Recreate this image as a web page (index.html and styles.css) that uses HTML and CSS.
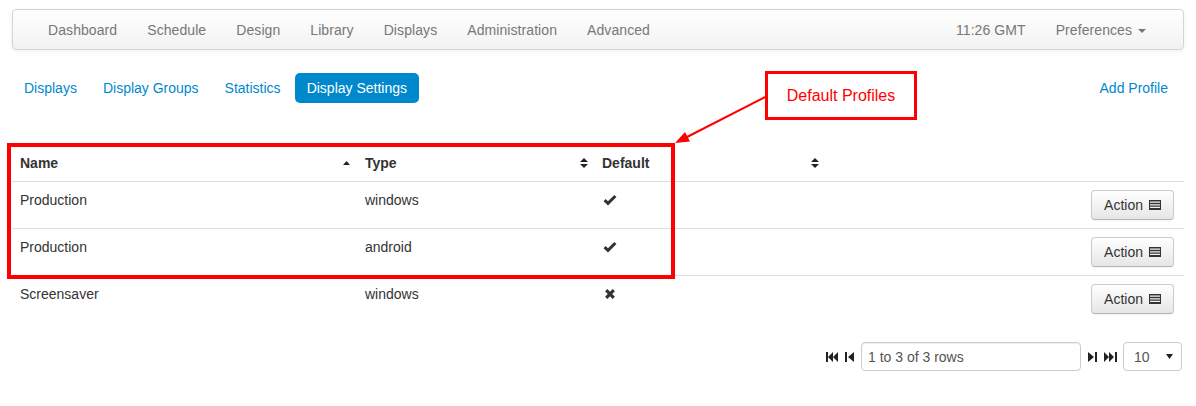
FILE: index.html
```html
<!DOCTYPE html>
<html>
<head>
<meta charset="utf-8">
<title>Display Settings</title>
<link rel="stylesheet" href="styles.css">
</head>
<body>
<div class="page">
  <nav class="navbar">
    <ul class="nav">
      <li><a>Dashboard</a></li>
      <li><a>Schedule</a></li>
      <li><a>Design</a></li>
      <li><a>Library</a></li>
      <li><a>Displays</a></li>
      <li><a>Administration</a></li>
      <li><a>Advanced</a></li>
    </ul>
    <ul class="nav nav-right">
      <li><a>11:26 GMT</a></li>
      <li><a>Preferences <span class="caret"></span></a></li>
    </ul>
  </nav>

  <div class="subnav">
    <ul class="pills">
      <li><a>Displays</a></li>
      <li><a>Display Groups</a></li>
      <li><a>Statistics</a></li>
      <li class="active"><a>Display Settings</a></li>
    </ul>
    <a class="add-link">Add Profile</a>
  </div>

  <table class="grid">
    <colgroup>
      <col class="c-name"><col class="c-type"><col class="c-default"><col>
    </colgroup>
    <thead>
      <tr>
        <th><div class="th-in"><span>Name</span><svg class="sort-asc" width="7" height="4" viewBox="0 0 7 4"><path d="M0 4 L3.5 0 L7 4 Z"/></svg></div></th>
        <th><div class="th-in"><span>Type</span><svg class="sort-both" width="8" height="10" viewBox="0 0 8 10"><path d="M0 4 L4 0 L8 4 Z M0 6 L4 10 L8 6 Z"/></svg></div></th>
        <th><div class="th-in"><span>Default</span><svg class="sort-both" width="8" height="10" viewBox="0 0 8 10"><path d="M0 4 L4 0 L8 4 Z M0 6 L4 10 L8 6 Z"/></svg></div></th>
        <th></th>
      </tr>
    </thead>
    <tbody>
      <tr>
        <td>Production</td>
        <td>windows</td>
        <td><svg class="ico-ok" width="14" height="12" viewBox="0 0 14 12"><path d="M1.6 6.2 L5 9.4 L12.4 2"/></svg></td>
        <td class="act"><button class="btn">Action <svg class="ico-list" width="12" height="10" viewBox="0 0 12 10"><path d="M0 0h12v1.6H0z M0 2.8h12v1.4H0z M0 5.4h12v1.4H0z M0 8h12v2H0z M0 0h1v10H0z M11 0h1v10h-1z"/></svg></button></td>
      </tr>
      <tr>
        <td>Production</td>
        <td>android</td>
        <td><svg class="ico-ok" width="14" height="12" viewBox="0 0 14 12"><path d="M1.6 6.2 L5 9.4 L12.4 2"/></svg></td>
        <td class="act"><button class="btn">Action <svg class="ico-list" width="12" height="10" viewBox="0 0 12 10"><path d="M0 0h12v1.6H0z M0 2.8h12v1.4H0z M0 5.4h12v1.4H0z M0 8h12v2H0z M0 0h1v10H0z M11 0h1v10h-1z"/></svg></button></td>
      </tr>
      <tr>
        <td>Screensaver</td>
        <td>windows</td>
        <td><svg class="ico-x" width="12" height="12" viewBox="0 0 12 12"><path d="M2.2 2.2 L9.8 9.8 M9.8 2.2 L2.2 9.8"/></svg></td>
        <td class="act"><button class="btn">Action <svg class="ico-list" width="12" height="10" viewBox="0 0 12 10"><path d="M0 0h12v1.6H0z M0 2.8h12v1.4H0z M0 5.4h12v1.4H0z M0 8h12v2H0z M0 0h1v10H0z M11 0h1v10h-1z"/></svg></button></td>
      </tr>
    </tbody>
  </table>

  <div class="pager">
    <svg class="pg-ico" width="12" height="10" viewBox="0 0 12 10"><path d="M0 0h2v10H0z M7 0 L2 5 L7 10 Z M12 0 L7 5 L12 10 Z"/></svg>
    <svg class="pg-ico" width="9" height="10" viewBox="0 0 9 10"><path d="M0 0h2v10H0z M9 0 L3 5 L9 10 Z"/></svg>
    <div class="pg-info">1 to 3 of 3 rows</div>
    <svg class="pg-ico" width="9" height="10" viewBox="0 0 9 10"><path d="M0 0 L6 5 L0 10 Z M7 0h2v10H7z"/></svg>
    <svg class="pg-ico" width="13" height="10" viewBox="0 0 13 10"><path d="M0 0 L5 5 L0 10 Z M5 0 L10 5 L5 10 Z M11 0h2v10h-2z"/></svg>
    <div class="pg-size"><span>10</span><svg width="7" height="5" viewBox="0 0 7 5"><path d="M0 0 L7 0 L3.5 5 Z"/></svg></div>
  </div>
</div>

<div class="highlight"></div>
<div class="callout">Default Profiles</div>
<svg class="arrow" width="1196" height="406" viewBox="0 0 1196 406">
  <line x1="765" y1="97" x2="687" y2="137" stroke="#ff0000" stroke-width="2"/>
  <polygon points="675,143 690,141.5 685,132" fill="#ff0000"/>
</svg>
</body>
</html>
```

FILE: styles.css
```css
* { box-sizing: border-box; }

html, body {
  margin: 0;
  padding: 0;
  background: #ffffff;
}

body {
  font-family: "Liberation Sans", Arial, sans-serif;
  font-size: 14px;
  line-height: 20px;
  color: #333333;
  width: 1196px;
  height: 406px;
  overflow: hidden;
  position: relative;
}

.page {
  padding: 9px 12px 0 12px;
}

/* navbar */
.navbar {
  display: flex;
  justify-content: space-between;
  height: 41px;
  padding: 0 22px 0 20px;
  border: 1px solid #d4d4d4;
  border-radius: 4px;
  background: linear-gradient(#ffffff, #f2f2f2);
  box-shadow: 0 1px 4px rgba(0, 0, 0, 0.065);
}

.nav {
  display: flex;
  margin: 0;
  padding: 0;
  list-style: none;
}

.nav a {
  display: block;
  padding: 10px 15px 9px;
  line-height: 20px;
  color: #777777;
  letter-spacing: 0.08px;
  text-decoration: none;
}

.caret {
  display: inline-block;
  width: 0;
  height: 0;
  margin-left: 2px;
  vertical-align: middle;
  border-top: 4px solid #777777;
  border-left: 4px solid transparent;
  border-right: 4px solid transparent;
}

/* sub navigation pills */
.subnav {
  display: flex;
  justify-content: space-between;
  align-items: center;
  margin-top: 23px;
}

.pills {
  display: flex;
  margin: 0;
  padding: 0;
  list-style: none;
}

.pills a {
  display: block;
  margin-right: 2px;
  padding: 5px 12px;
  line-height: 20px;
  border-radius: 5px;
  color: #0088cc;
  text-decoration: none;
}

.pills .active a {
  background: #0088cc;
  color: #ffffff;
}

.add-link {
  padding: 5px 16px 5px 12px;
  color: #0088cc;
  text-decoration: none;
}

/* table */
.grid {
  width: 100%;
  margin-top: 42px;
  border-collapse: collapse;
  table-layout: fixed;
}

.c-name { width: 345px; }
.c-type { width: 237px; }
.c-default { width: 231px; }

.grid th {
  padding: 8px 6px 8px 8px;
  text-align: left;
  font-weight: bold;
  line-height: 20px;
  border-bottom: 1px solid #dddddd;
}

.th-in {
  display: flex;
  justify-content: space-between;
  align-items: center;
}

.sort-asc, .sort-both {
  fill: #222222;
}

.sort-asc { margin-right: 1px; }

.grid td {
  padding: 8px;
  vertical-align: top;
  line-height: 20px;
  border-top: 1px solid #dddddd;
}

.grid tbody tr:first-child td { border-top: none; }

.grid td.act {
  text-align: right;
  padding-right: 10px;
}

.ico-ok {
  margin: 4px 0 0 1px;
  fill: none;
  stroke: #333333;
  stroke-width: 3;
}

.ico-x {
  margin: 4px 0 0 2px;
  fill: none;
  stroke: #333333;
  stroke-width: 3.2;
}

.btn {
  display: inline-flex;
  align-items: center;
  gap: 6px;
  height: 30px;
  padding: 0 12px;
  font-family: "Liberation Sans", Arial, sans-serif;
  font-size: 14px;
  color: #333333;
  background: linear-gradient(#ffffff, #e6e6e6);
  border: 1px solid #cccccc;
  border-bottom-color: #b3b3b3;
  border-radius: 4px;
  box-shadow: inset 0 1px 0 rgba(255, 255, 255, 0.2), 0 1px 2px rgba(0, 0, 0, 0.05);
}

.ico-list { fill: #333333; }

/* pagination */
.pager {
  display: flex;
  justify-content: flex-end;
  align-items: center;
  gap: 7px;
  margin-top: 20px;
  padding-right: 2px;
}

.pg-ico { fill: #222222; }

.pg-info {
  width: 220px;
  height: 29px;
  padding: 4px 6px;
  line-height: 20px;
  color: #555555;
  border: 1px solid #cccccc;
  border-radius: 4px;
  background: #ffffff;
  box-shadow: inset 0 1px 1px rgba(0, 0, 0, 0.075);
}

.pg-size {
  display: flex;
  justify-content: space-between;
  align-items: center;
  width: 59px;
  height: 29px;
  margin-left: -1px;
  padding: 0 8px 0 10px;
  color: #555555;
  border: 1px solid #cccccc;
  border-radius: 4px;
  background: #ffffff;
}

.pg-size svg { fill: #222222; }

/* annotations */
.highlight {
  position: absolute;
  left: 7px;
  top: 143px;
  width: 668px;
  height: 136px;
  border: 4px solid #ff0000;
}

.callout {
  position: absolute;
  left: 765px;
  top: 71px;
  width: 152px;
  height: 49px;
  display: flex;
  align-items: center;
  justify-content: center;
  border: 3px solid #ff0000;
  background: #ffffff;
  color: #ff0000;
  font-size: 16px;
}

.arrow {
  position: absolute;
  left: 0;
  top: 0;
  pointer-events: none;
}
```
